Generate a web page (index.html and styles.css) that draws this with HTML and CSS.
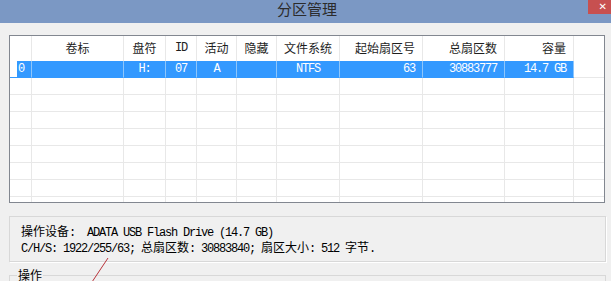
FILE: index.html
```html
<!DOCTYPE html>
<html lang="zh-CN">
<head>
<meta charset="utf-8"/>
<meta content="width=device-width, initial-scale=1.0" name="viewport"/>
<title>分区管理</title>
<link rel="stylesheet" href="styles.css">
</head>
<body>
<header class="titlebar">
  <span></span>
  <h1>分区管理</h1>
  <button class="close">✕</button>
</header>
<main class="content">
  <div class="list">
    <div class="row head">
      <div></div>
      <div class="c">卷标</div>
      <div class="c">盘符</div>
      <div class="c mono">ID</div>
      <div class="c">活动</div>
      <div class="c">隐藏</div>
      <div class="c">文件系统</div>
      <div class="r">起始扇区号</div>
      <div class="r">总扇区数</div>
      <div class="r">容量</div>
      <div></div>
    </div>
    <div class="row sel mono">
      <div class="idx">0</div>
      <div></div>
      <div class="c">H:</div>
      <div class="c">07</div>
      <div class="c">A</div>
      <div></div>
      <div class="c">NTFS</div>
      <div class="r">63</div>
      <div class="r">30883777</div>
      <div class="r">14.7 GB</div>
      <div></div>
    </div>
    <div class="row"><div></div><div></div><div></div><div></div><div></div><div></div><div></div><div></div><div></div><div></div><div></div></div>
    <div class="row"><div></div><div></div><div></div><div></div><div></div><div></div><div></div><div></div><div></div><div></div><div></div></div>
    <div class="row"><div></div><div></div><div></div><div></div><div></div><div></div><div></div><div></div><div></div><div></div><div></div></div>
    <div class="row"><div></div><div></div><div></div><div></div><div></div><div></div><div></div><div></div><div></div><div></div><div></div></div>
    <div class="row"><div></div><div></div><div></div><div></div><div></div><div></div><div></div><div></div><div></div><div></div><div></div></div>
    <div class="row"><div></div><div></div><div></div><div></div><div></div><div></div><div></div><div></div><div></div><div></div><div></div></div>
    <div class="row"><div></div><div></div><div></div><div></div><div></div><div></div><div></div><div></div><div></div><div></div><div></div></div>
    <div class="row"><div></div><div></div><div></div><div></div><div></div><div></div><div></div><div></div><div></div><div></div><div></div></div>
  </div>

  <div class="info">
    <p><span class="cn">操作设备</span>:  ADATA USB Flash Drive (14.7 GB)</p>
    <p>C/H/S: 1922/255/63; <span class="cn">总扇区数</span>: 30883840; <span class="cn">扇区大小</span>: 512 <span class="cn">字节</span>.</p>
  </div>

  <fieldset class="ops">
    <legend>操作</legend>
  </fieldset>
</main>
<!-- red annotation stroke drawn over the dialog -->
<svg class="mark" width="24" height="30" viewBox="0 0 24 30">
  <line x1="18" y1="3" x2="2" y2="27" stroke="#b8323a" stroke-width="1"/>
</svg>
</body>
</html>
```

FILE: styles.css
```css
:root {
    --bg: #f0f0f0;
    --title-bg: #7b98c4;
    --grid: #e8e8e8;
    --frame: #828790;
    --sel: #3399ff;
    --cn: "Noto Sans CJK SC", "Microsoft YaHei", sans-serif;
    --mono: "Liberation Mono", "DejaVu Sans Mono", "Noto Sans CJK SC", monospace;
}
* {
    box-sizing: border-box;
    margin: 0;
    padding: 0;
}
body {
    background-color: var(--bg);
    font-family: var(--cn);
    font-size: 12px;
    color: #000;
    overflow: hidden;
    position: relative;
    height: 281px;
}
.titlebar {
    display: grid;
    grid-template-columns: 1fr auto 1fr;
    align-items: start;
    height: 23px;
    background-color: var(--title-bg);
}
.titlebar h1 {
    font-weight: normal;
    font-size: 15px;
    line-height: 17px;
    color: #2b2b2b;
    padding-left: 3px;
}
.titlebar .close {
    justify-self: end;
    width: 23px;
    height: 14px;
    border: none;
    background-color: #c75050;
    color: #fff;
    font-size: 10px;
    line-height: 14px;
    text-align: right;
    padding-right: 4px;
    font-family: "DejaVu Sans", sans-serif;
}
.content {
    padding: 12px 6px 0 9px;
}
.list {
    width: 596px;
    height: 168px;
    border: 1px solid var(--frame);
    background-color: #fff;
    overflow: hidden;
}
.row {
    display: grid;
    grid-template-columns: 22px 92px 42px 31px 40px 40px 63px 83px 82px 69px 1fr;
    height: 17px;
    line-height: 16px;
}
.row > div {
    border-right: 1px solid var(--grid);
    border-bottom: 1px solid var(--grid);
    white-space: pre;
    overflow: hidden;
}
.row > div:last-child {
    border-right: none;
}
.row .c {
    text-align: center;
}
.row .r {
    text-align: right;
    padding-right: 7px;
}
.mono {
    font-family: var(--mono);
    letter-spacing: -1.2px;
}
.row.head {
    height: 25px;
    line-height: 24px;
    color: #1e1e1e;
}
.row.head > div {
    border-bottom: none;
}
.row.sel {
    color: #fff;
}
.row.sel > div {
    background-color: var(--sel);
    border-right-color: #8ec6fb;
    border-bottom-color: var(--sel);
}
.row.sel > div:last-child {
    background-color: #fff;
    border-bottom-color: var(--grid);
}
.row.sel .idx {
    background: linear-gradient(to right, #fff 7px, var(--sel) 7px);
    padding-left: 8px;
}
.info {
    width: 597px;
    height: 46px;
    margin-top: 13px;
    border: 1px solid #d8d8d8;
    box-shadow: 1px 1px 0 #fff;
    padding: 7px 11px;
    font-family: var(--mono);
    letter-spacing: -1.2px;
    line-height: 14px;
}
.info p {
    white-space: pre;
}
.info .cn {
    font-family: var(--cn);
    letter-spacing: 0;
}
.ops {
    width: 597px;
    height: 60px;
    margin-top: 6px;
    border: 1px solid #d8d8d8;
    padding: 0 7px;
}
.ops legend {
    padding: 0 1px;
    line-height: 14px;
}
.mark {
    position: absolute;
    left: 90px;
    top: 255px;
}
```
